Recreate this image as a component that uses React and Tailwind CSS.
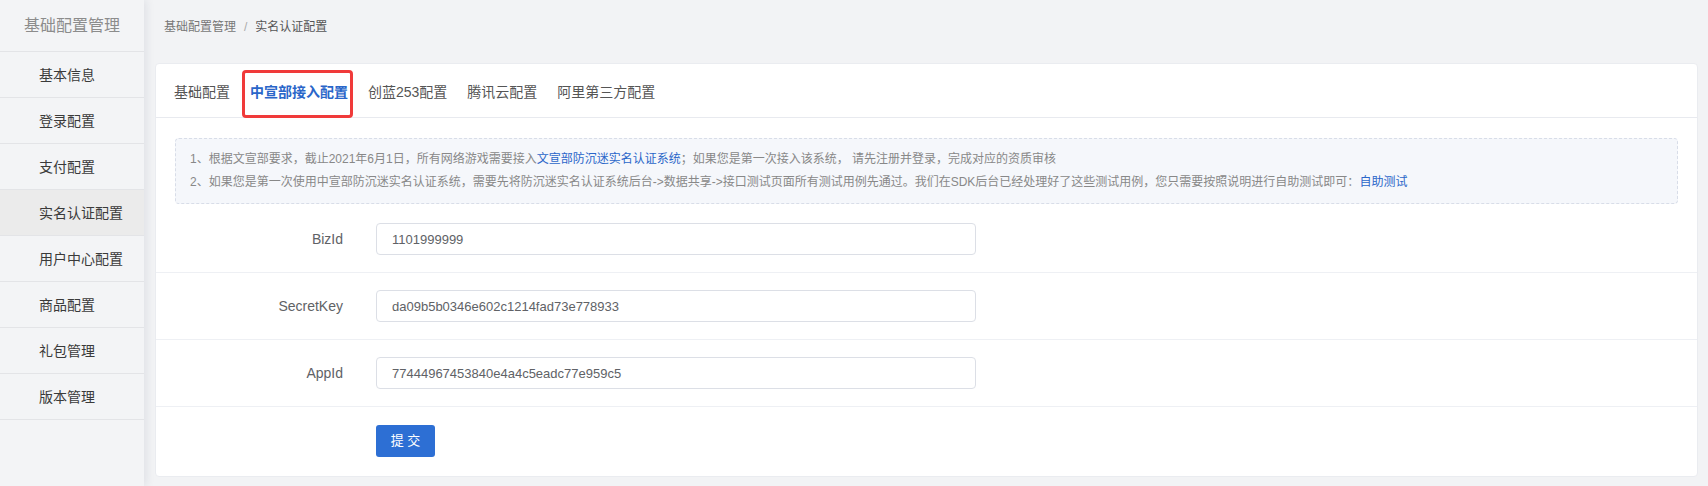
import React from 'react';

const menuItems = ['基本信息', '登录配置', '支付配置', '实名认证配置', '用户中心配置', '商品配置', '礼包管理', '版本管理'];
const tabs = ['基础配置', '中宣部接入配置', '创蓝253配置', '腾讯云配置', '阿里第三方配置'];
const fields = [
  { label: 'BizId', value: '1101999999' },
  { label: 'SecretKey', value: 'da09b5b0346e602c1214fad73e778933' },
  { label: 'AppId', value: '77444967453840e4a4c5eadc77e959c5' },
];

const Sidebar = ({ active }) => (
  <aside className="relative z-10 w-[144px] shrink-0 bg-[#f3f4f6] shadow-[3px_0_8px_rgba(30,40,80,0.08)]">
    <div className="flex h-[52px] items-center justify-center border-b border-[#e3e4e7] text-[16px] text-[#8c8c8c]">
      基础配置管理
    </div>
    <ul>
      {menuItems.map((item) => (
        <li
          key={item}
          className={`flex h-[46px] items-center border-b border-[#e3e4e7] pl-[39px] pt-[2px] text-[14px] text-[#3a3a3a] ${
            item === active ? 'bg-[#ebebeb]' : ''
          }`}
        >
          {item}
        </li>
      ))}
    </ul>
  </aside>
);

const App = () => (
  <div className="flex h-screen bg-[#f2f3f5] font-['Liberation_Sans','Noto_Sans_CJK_SC',sans-serif]">
    <Sidebar active="实名认证配置" />

    <main className="flex min-w-0 flex-1 flex-col pl-[11px] pr-[10px]">
      <div className="flex h-[54px] items-center pl-[9px] text-[12px] text-[#777]">
        <span>基础配置管理</span>
        <span className="mx-[8px] text-[#aaa]">/</span>
        <span className="text-[#555]">实名认证配置</span>
      </div>

      <div className="mt-[9px] h-[414px] rounded-[4px] border border-[#eaecf0] bg-white">
        {/* tabs */}
        <div className="flex h-[54px] items-center gap-[20px] border-b border-[#e8eaef] pl-[18px] pt-[4px] text-[14px] text-[#555]">
          {tabs.map((tab, i) =>
            i === 1 ? (
              <span key={tab} className="relative font-bold text-[#2a66c9]">
                {tab}
                <span className="absolute -bottom-[15px] -left-[8px] -right-[5px] -top-[12px] rounded-[4px] border-[3px] border-[#f03a3a]" />
              </span>
            ) : (
              <span key={tab}>{tab}</span>
            )
          )}
        </div>

        {/* notice */}
        <div className="mx-[19px] mt-[20px] rounded-[4px] border border-dashed border-[#d8dde8] bg-[#f5f7fb] px-[14px] py-[9px] text-[12px] leading-[23px] text-[#888]">
          <p>
            1、根据文宣部要求，截止2021年6月1日，所有网络游戏需要接入
            <a className="text-[#2a66c9]">文宣部防沉迷实名认证系统</a>
            ；如果您是第一次接入该系统， 请先注册并登录，完成对应的资质审核
          </p>
          <p>
            2、如果您是第一次使用中宣部防沉迷实名认证系统，需要先将防沉迷实名认证系统后台-&gt;数据共享-&gt;接口测试页面所有测试用例先通过。我们在SDK后台已经处理好了这些测试用例，您只需要按照说明进行自助测试即可：
            <a className="text-[#2a66c9]">自助测试</a>
          </p>
        </div>

        {/* form */}
        <form className="mt-[2px]">
          {fields.map((f) => (
            <div key={f.label} className="flex h-[67px] items-center border-b border-[#eef0f4]">
              <label className="w-[187px] text-right text-[14px] text-[#606266]">{f.label}</label>
              <input
                readOnly
                value={f.value}
                className="ml-[33px] h-[32px] w-[600px] rounded-[4px] border border-[#dcdfe6] bg-white pl-[15px] text-[13px] text-[#606266] outline-none"
              />
            </div>
          ))}
          <div className="pl-[220px] pt-[18px]">
            <button
              type="button"
              className="h-[32px] w-[59px] rounded-[3px] bg-[#2d6fd4] text-[13px] text-white"
            >
              提 交
            </button>
          </div>
        </form>
      </div>
    </main>
  </div>
);

export default App;
